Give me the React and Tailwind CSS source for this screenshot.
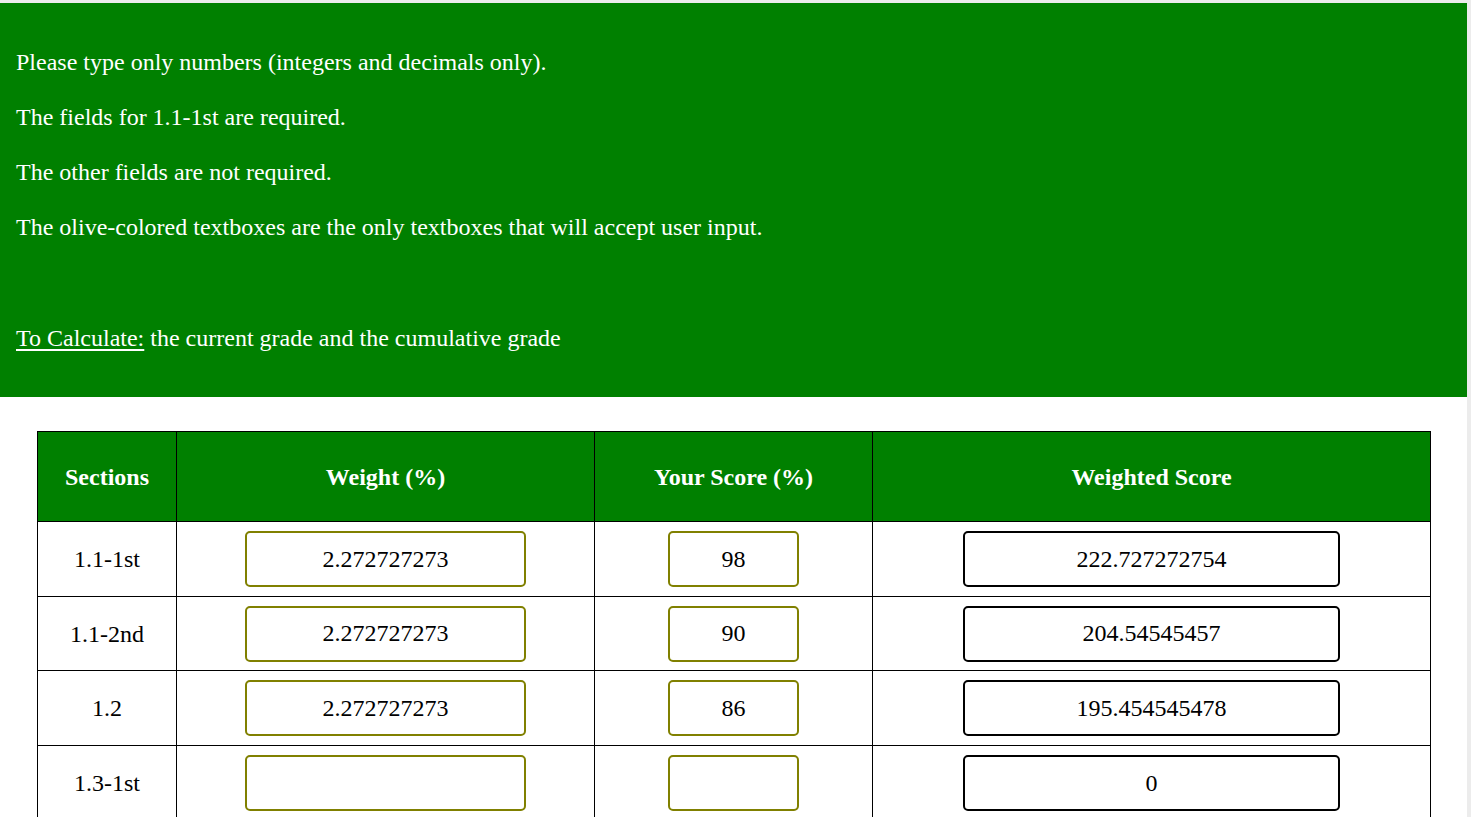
import React from "react";

const rows = [
  { name: "1.1-1st", weight: "2.272727273", score: "98", weighted: "222.727272754", h: "h-[75px]" },
  { name: "1.1-2nd", weight: "2.272727273", score: "90", weighted: "204.54545457", h: "h-[74px]" },
  { name: "1.2", weight: "2.272727273", score: "86", weighted: "195.454545478", h: "h-[75px]" },
  { name: "1.3-1st", weight: "", score: "", weighted: "0", h: "h-[75px]" },
];

const serif = "font-['Liberation_Serif','Times_New_Roman',serif]";

export default function App() {
  return (
    <div className={`min-h-screen bg-[#ececec] pt-[3px] ${serif}`}>
      <div className="w-[1467px] bg-white min-h-[814px]">
        <div className={`bg-[#008000] text-white text-[24px] px-4 h-[394px] pt-[34px] ${serif}`}>
          <p className="h-[55px] leading-[50px]">Please type only numbers (integers and decimals only).</p>
          <p className="h-[55px] leading-[50px]">The fields for 1.1-1st are required.</p>
          <p className="h-[55px] leading-[50px]">The other fields are not required.</p>
          <p className="h-[55px] leading-[50px]">The olive-colored textboxes are the only textboxes that will accept user input.</p>
          <p className="h-[55px]"></p>
          <p className="h-[55px] leading-[50px] mt-[1px]">
            <span className="underline underline-offset-[3px]">To Calculate:</span> the current grade and the cumulative grade
          </p>
        </div>

        <div className="pt-[34px] pl-[37px]">
          <table className={`border-collapse w-[1394px] text-[24px] ${serif}`}>
            <thead>
              <tr className="bg-[#008000] text-white h-[90px]">
                <th className="border border-black w-[139px] font-bold">Sections</th>
                <th className="border border-black w-[418px] font-bold">Weight (%)</th>
                <th className="border border-black w-[278px] font-bold">Your Score (%)</th>
                <th className="border border-black font-bold">Weighted Score</th>
              </tr>
            </thead>
            <tbody>
              {rows.map((r) => (
                <tr key={r.name} className={r.h}>
                  <td className="border border-black text-center text-black">{r.name}</td>
                  <td className="border border-black text-center">
                    <input
                      readOnly
                      value={r.weight}
                      className={`w-[281px] h-[56px] border-2 border-[#808000] rounded-[5px] text-center text-[24px] text-black bg-white outline-none align-middle ${serif}`}
                    />
                  </td>
                  <td className="border border-black text-center">
                    <input
                      readOnly
                      value={r.score}
                      className={`w-[131px] h-[56px] border-2 border-[#808000] rounded-[5px] text-center text-[24px] text-black bg-white outline-none align-middle ${serif}`}
                    />
                  </td>
                  <td className="border border-black text-center">
                    <input
                      readOnly
                      value={r.weighted}
                      className={`w-[377px] h-[56px] border-2 border-black rounded-[5px] text-center text-[24px] text-black bg-white outline-none align-middle ${serif}`}
                    />
                  </td>
                </tr>
              ))}
            </tbody>
          </table>
        </div>
      </div>
    </div>
  );
}
